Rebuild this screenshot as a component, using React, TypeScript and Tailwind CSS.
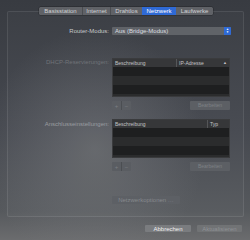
import React from "react";

const font = { fontFamily: '"Liberation Sans", Arial, sans-serif' };

function Tabs() {
  const tabs = [
    { t: "Basisstation", w: "w-[43px]" },
    { t: "Internet", w: "w-[28px]" },
    { t: "Drahtlos", w: "w-[32px]" },
    { t: "Netzwerk", w: "w-[34px]" },
    { t: "Laufwerke", w: "w-[37px]" },
  ];
  return (
    <div className="relative z-10 ml-[39px] mt-[7px] flex h-[8px] w-[174px] overflow-hidden rounded-[1.5px] bg-[#606267] shadow-[0_0_0_0.5px_rgba(0,0,0,0.35)]">
      {tabs.map((x, i) => (
        <div
          key={x.t}
          className={`${x.w} flex items-center justify-center text-[6px] leading-none ${
            x.t === "Netzwerk" ? "bg-[#2f6ad6] text-white" : "text-[#d2d3d5]"
          } ${i > 0 && x.t !== "Netzwerk" && tabs[i - 1].t !== "Netzwerk" ? "border-l border-[#4a4c50]" : ""}`}
        >
          {x.t}
        </div>
      ))}
    </div>
  );
}

function Table({ col1, col2, divider, arrow }: { col1: string; col2: string; divider: string; arrow?: boolean }) {
  return (
    <div className="flex h-[39px] w-[118px] flex-col overflow-hidden border border-[#3a3b3d] bg-[#1e1f20]">
      <div className="flex h-[8px] items-center bg-[#363739] text-[5px] leading-none text-[#c4c5c7]">
        <div className={`${divider} flex h-full items-center border-r border-[#555658] pl-[2px]`}>{col1}</div>
        <div className="flex flex-1 items-center justify-between pl-[2px] pr-[2px]">
          <span>{col2}</span>
          {arrow && <span className="text-[4px]">▲</span>}
        </div>
      </div>
      <div className="h-[9px] bg-[#1e1f20]" />
      <div className="h-[9px] bg-[#2b2c2d]" />
      <div className="h-[9px] bg-[#1e1f20]" />
      <div className="flex-1 bg-[#2b2c2d]" />
    </div>
  );
}

function ButtonsRow() {
  return (
    <div className="flex h-[9px] w-[118px] items-center justify-between">
      <div className="flex h-[9px] w-[19px] rounded-[1px] bg-[#5a5d62]">
        <div className="flex w-[10px] items-center justify-center border-r border-[#4b4e52] text-[6px] leading-none text-[#7b7e82]">+</div>
        <div className="flex flex-1 items-center justify-center text-[6px] leading-none text-[#7b7e82]">−</div>
      </div>
      <div className="flex h-[9px] w-[40px] items-center justify-center rounded-[1px] bg-[#5c5f64] text-[5px] leading-none text-[#7e8185]">
        Bearbeiten
      </div>
    </div>
  );
}

export default function App() {
  return (
    <div
      className="relative h-[240px] w-[250px] overflow-hidden bg-[radial-gradient(ellipse_110px_120px_at_38%_62%,rgba(125,127,131,0.5),transparent),linear-gradient(to_bottom,#383b41,#464950_55%,#56595d_88%,#6b6c6e)]"
      style={font}
    >
      <Tabs />
      <div className="ml-[7px] -mt-[4px] h-[206px] w-[237px] rounded-[2px] border border-[rgba(255,255,255,0.09)] bg-[rgba(255,255,255,0.02)]">
        <div className="flex flex-col pt-[15px]">
          <div className="flex h-[8px] items-center">
            <div className="w-[103px] pr-[2px] text-right text-[6px] leading-none text-[#c7c8ca]">Router-Modus:</div>
            <div className="ml-[1px] flex h-[8px] w-[119px] items-center justify-between rounded-[1px] bg-[#606368] pl-[3px]">
              <span className="text-[6px] leading-none text-[#dcdde0]">Aus (Bridge-Modus)</span>
              <div className="flex h-[8px] w-[7px] flex-col items-center justify-center rounded-r-[1px] bg-[#2f6ad6] text-[3px] leading-[3px] text-white">
                <span>▲</span>
                <span>▼</span>
              </div>
            </div>
          </div>

          <div className="mt-[23px] flex">
            <div className="w-[103px] pr-[2px] pt-[1px] text-right text-[6px] leading-none text-[#707378]">DHCP-Reservierungen:</div>
            <div className="ml-[1px] flex flex-col gap-[4px]">
              <Table col1="Beschreibung" col2="IP-Adresse" divider="w-[64px]" arrow />
              <ButtonsRow />
            </div>
          </div>

          <div className="mt-[9px] flex">
            <div className="w-[103px] pr-[2px] pt-[2px] text-right text-[6px] leading-none text-[#9a9ca0]">Anschlusseinstellungen:</div>
            <div className="ml-[1px] flex flex-col gap-[4px]">
              <Table col1="Beschreibung" col2="Typ" divider="w-[95px]" />
              <ButtonsRow />
            </div>
          </div>

          <div className="mt-[25px] flex">
            <div className="ml-[104px] flex h-[8px] w-[68px] items-center justify-center rounded-[1px] bg-[#5d6065] text-[6px] leading-none text-[#86898d]">
              Netzwerkoptionen …
            </div>
          </div>
        </div>
      </div>

      <div className="mt-[8px] flex justify-end gap-[6px] pr-[8px]">
        <div className="flex h-[7px] w-[46px] items-center justify-center rounded-[1px] bg-[#7a7c7f] text-[6px] leading-none text-[#f0f0f0]">
          Abbrechen
        </div>
        <div className="flex h-[7px] w-[45px] items-center justify-center rounded-[1px] bg-[#717375] text-[6px] leading-none text-[#909295]">
          Aktualisieren
        </div>
      </div>
    </div>
  );
}
